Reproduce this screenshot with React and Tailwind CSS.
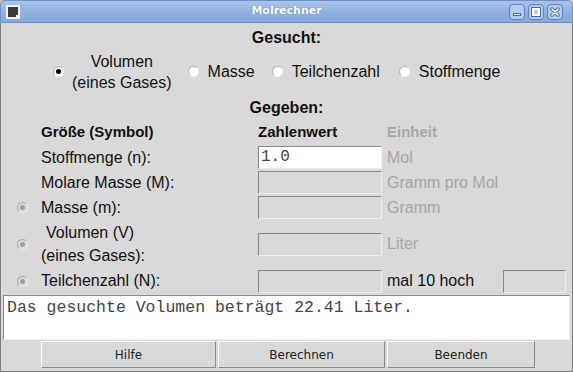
import React from 'react';

const sans = "font-['Liberation_Sans',Arial,sans-serif]";
const mono = "font-['Liberation_Mono','Courier_New',monospace]";

function Radio({ checked, disabled }) {
  if (disabled) {
    return (
      <span className="inline-flex w-[11px] h-[11px] rounded-full border border-[#a8a8a8] border-r-[#e8e8e8] border-b-[#e8e8e8] bg-[#dcdcdc] items-center justify-center shrink-0">
        <span className="w-[5px] h-[5px] rounded-full bg-[#a0a0a0]" />
      </span>
    );
  }
  return (
    <span className="inline-flex w-[11px] h-[11px] rounded-full border border-[#b4b4b4] border-r-[#f4f4f4] border-b-[#f4f4f4] bg-white items-center justify-center shrink-0">
      {checked && <span className="w-[5px] h-[5px] rounded-full bg-black" />}
    </span>
  );
}

function Field({ value, enabled, w = 'w-[124px]' }) {
  return (
    <div
      className={`${w} h-[23px] border border-[#8a8a8a] border-r-[#efefef] border-b-[#efefef] ${
        enabled ? 'bg-white' : 'bg-[#d9d9d9]'
      } ${mono} text-[16px] leading-[21px] pl-[2px] text-[#444]`}
    >
      {value}
    </div>
  );
}

function TitleButton({ children }) {
  return (
    <div className="w-[16px] h-[16px] rounded-[4px] border border-[#5f82b8] bg-[#b3cbed] flex items-center justify-center">
      {children}
    </div>
  );
}

export default function App() {
  const rows = [
    { label: 'Stoffmenge (n):', value: '1.0', enabled: true, unit: 'Mol' },
    { label: 'Molare Masse (M):', unit: 'Gramm pro Mol' },
    { label: 'Masse (m):', unit: 'Gramm', radio: true },
  ];

  return (
    <div className={`w-[573px] h-[372px] bg-[#c9c9c9] flex flex-col ${sans}`}>
      {/* Title bar */}
      <div className="h-[23px] rounded-t-[5px] border border-[#6f90c4] bg-gradient-to-b from-[#a9c4ea] via-[#91b2e0] to-[#86a8da] grid grid-cols-[1fr_auto_1fr] items-center px-[5px] shrink-0">
        <div className="w-[14px] h-[14px] border-2 border-[#eef3fa] bg-[#3a3a3a] relative">
          <div className="absolute right-[-2px] bottom-[-2px] w-[4px] h-[4px] bg-[#eef3fa]" />
        </div>
        <div className="text-center text-white font-bold text-[11px] font-['DejaVu_Sans',sans-serif] [text-shadow:0_0_1px_#4a6a9a]">
          Molrechner
        </div>
        <div className="flex gap-[3px] justify-end pr-[4px]">
          <TitleButton>
            <div className="w-[8px] h-[3px] bg-white border border-[#4b6a9c] mt-[5px]" />
          </TitleButton>
          <TitleButton>
            <div className="w-[8px] h-[8px] border-2 border-white outline outline-1 outline-[#4b6a9c]" />
          </TitleButton>
          <TitleButton>
            <svg width="10" height="10" viewBox="0 0 10 10">
              <path d="M2 2 L8 8 M8 2 L2 8" stroke="#4b6a9c" strokeWidth="3.5" strokeLinecap="round" />
              <path d="M2 2 L8 8 M8 2 L2 8" stroke="#ffffff" strokeWidth="1.6" strokeLinecap="round" />
            </svg>
          </TitleButton>
        </div>
      </div>

      {/* Window body */}
      <div className="flex-1 border-x border-b border-[#7d7d7d] px-[2px] pb-[2px] bg-[#d9d9d9] flex flex-col">
        <div className="flex-1 flex flex-col text-[16px] text-[#111]">
          <div className="h-[27px] pt-[4px] leading-[22px] text-center font-bold text-[16px]">Gesucht:</div>

          <div className="h-[43px] flex items-center pl-[50px]">
            <Radio checked />
            <div className="ml-[8px] text-center leading-[21px]">
              Volumen
              <br />
              (eines Gases)
            </div>
            <div className="ml-[16px]"><Radio /></div>
            <span className="ml-[9px]">Masse</span>
            <div className="ml-[17px]"><Radio /></div>
            <span className="ml-[9px]">Teilchenzahl</span>
            <div className="ml-[19px]"><Radio /></div>
            <span className="ml-[9px]">Stoffmenge</span>
          </div>

          <div className="h-[30px] leading-[30px] text-center font-bold text-[16px]">Gegeben:</div>

          <div className="grid grid-cols-[38px_217px_129px_116px_63px]">
            <div className="h-[22px]" />
            <div className="h-[22px] leading-[18px] font-bold text-[15px]">Größe (Symbol)</div>
            <div className="h-[22px] leading-[18px] font-bold text-[15px]">Zahlenwert</div>
            <div className="h-[22px] leading-[18px] font-bold text-[15px] text-[#a6a6a6] col-span-2">Einheit</div>

            {rows.map((r) => (
              <React.Fragment key={r.label}>
                <div className="h-[25px] flex items-center justify-center">{r.radio && <Radio disabled />}</div>
                <div className="h-[25px] flex items-center">{r.label}</div>
                <div className="h-[25px] flex items-center">
                  <Field value={r.value} enabled={r.enabled} />
                </div>
                <div className="h-[25px] flex items-center text-[#a6a6a6] col-span-2">{r.unit}</div>
              </React.Fragment>
            ))}

            <div className="h-[48px] flex items-center justify-center"><Radio disabled /></div>
            <div className="h-[48px] flex flex-col justify-center leading-[23px]">
              <span className="pl-[5px]">Volumen (V)</span>
              <span>(eines Gases):</span>
            </div>
            <div className="h-[48px] flex items-center"><Field /></div>
            <div className="h-[48px] flex items-center text-[#a6a6a6] col-span-2">Liter</div>

            <div className="h-[26px] flex items-center justify-center"><Radio disabled /></div>
            <div className="h-[26px] flex items-center">Teilchenzahl (N):</div>
            <div className="h-[26px] flex items-center"><Field /></div>
            <div className="h-[26px] flex items-center">mal 10 hoch</div>
            <div className="h-[26px] flex items-center"><Field w="w-[63px]" /></div>
          </div>

          {/* Result */}
          <div className={`mt-[1px] h-[45px] bg-white border border-[#8a8a8a] border-r-[#f0f0f0] border-b-[#f0f0f0] ${mono} text-[16.5px] leading-[20px] pl-[3px] pt-[2px] text-[#444]`}>
            Das gesuchte Volumen beträgt 22.41 Liter.
          </div>

          {/* Buttons */}
          <div className="flex pl-[38px] gap-[2px] mt-[1px] font-['DejaVu_Sans',sans-serif] text-[12px] text-[#222]">
            <button className="w-[175px] h-[27px] border border-white border-r-[#8a8a8a] border-b-[#8a8a8a] bg-[#d9d9d9]">Hilfe</button>
            <button className="w-[167px] h-[27px] border border-white border-r-[#8a8a8a] border-b-[#8a8a8a] bg-[#d9d9d9]">Berechnen</button>
            <button className="w-[148px] h-[27px] border border-white border-r-[#8a8a8a] border-b-[#8a8a8a] bg-[#d9d9d9]">Beenden</button>
          </div>
        </div>
      </div>
    </div>
  );
}
